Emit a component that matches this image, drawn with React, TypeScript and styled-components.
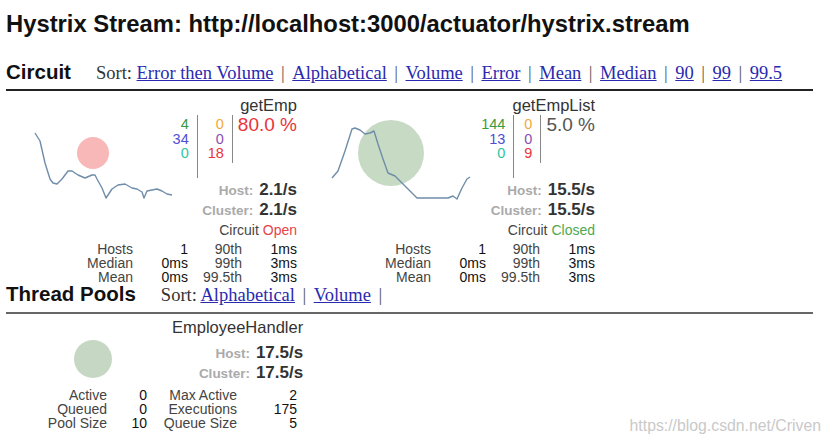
import React from "react";
import styled, { createGlobalStyle } from "styled-components";

const GlobalStyle = createGlobalStyle`
  body {
    margin: 0;
    background: #fff;
    font-family: "Liberation Sans", Arial, sans-serif;
    color: #333;
  }
`;

const Page = styled.div`
  position: relative;
  width: 830px;
  height: 443px;
  overflow: hidden;
  box-sizing: border-box;
  padding: 10px 17px 0 6px;
`;

const Title = styled.h1`
  margin: 0;
  font-size: 23.8px;
  line-height: 27px;
  font-weight: bold;
  color: #111;
`;

const SectionHeader = styled.div<{ $top: number; $pad: number; $line: string }>`
  display: flex;
  align-items: baseline;
  margin-top: ${(p) => p.$top}px;
  padding-bottom: ${(p) => p.$pad}px;
  border-bottom: 2px solid ${(p) => p.$line};
  line-height: 20px;
`;

const SectionTitle = styled.span`
  font-size: 20.5px;
  font-weight: bold;
  color: #111;
`;

const SortBar = styled.span`
  margin-left: 25px;
  font-family: "Liberation Serif", "Times New Roman", serif;
  font-size: 18.5px;
  color: #333;
  white-space: pre;

  a {
    color: #2a2ab0;
    text-decoration: underline;
  }
`;

const Sep = styled.span`
  margin: 0 7.5px;
  color: #555;
`;

const Monitors = styled.div`
  display: flex;
  gap: 7px;
`;

const Card = styled.div<{ $pt: number }>`
  width: 291px;
  padding-top: ${(p) => p.$pt}px;
`;

const Top = styled.div`
  display: flex;
`;

const ChartBox = styled.div`
  width: 166px;
  flex: none;
  svg {
    display: block;
    overflow: visible;
  }
`;

const Stats = styled.div`
  flex: 1;
  display: flex;
  flex-direction: column;
  align-items: flex-end;
  white-space: nowrap;
`;

const Name = styled.div`
  height: 16px;
  font-size: 16.5px;
  line-height: 16px;
  color: #333;
`;

const Counts = styled.div`
  display: flex;
  margin-top: 2px;
`;

const CountCol = styled.div<{ $h: number; $pl: number }>`
  box-sizing: border-box;
  height: ${(p) => p.$h}px;
  padding: 2px 8px 0 ${(p) => p.$pl}px;
  border-right: 1px solid #888;
  text-align: right;
  font-size: 14.5px;
  line-height: 14.5px;
`;

const Count = styled.div<{ $c: string }>`
  color: ${(p) => p.$c};
`;

const Pct = styled.div<{ $c: string }>`
  padding: 1px 0 0 5px;
  font-size: 19px;
  line-height: 18px;
  color: ${(p) => p.$c};
`;

const Rate = styled.div<{ $mt: number }>`
  display: flex;
  align-items: baseline;
  height: 20px;
  margin-top: ${(p) => p.$mt}px;
  font-size: 13.5px;
  line-height: 20px;
  font-weight: bold;
  color: #aaa;

  b {
    margin-left: 6px;
    font-size: 17px;
    line-height: 20px;
    color: #333;
  }
`;

const Status = styled.div`
  height: 20px;
  line-height: 20px;
  font-size: 14px;
  color: #444;
`;

const StatusWord = styled.span<{ $c: string }>`
  color: ${(p) => p.$c};
`;

const Table = styled.div<{ $cols: string; $mt: number }>`
  display: grid;
  grid-template-columns: ${(p) => p.$cols};
  margin-top: ${(p) => p.$mt}px;
  font-size: 14px;
  line-height: 14px;
  text-align: right;
  white-space: nowrap;
`;

const Cell = styled.span<{ $data?: boolean }>`
  color: ${(p) => (p.$data ? "#111" : "#444")};
`;

const Watermark = styled.div`
  position: absolute;
  right: 9px;
  top: 417px;
  font-size: 15.8px;
  line-height: 18px;
  color: #c9c9c9;
`;

const GREEN = "#3b9a3b";
const BLUE = "#4d4dd6";
const TEAL = "#2ec4a0";
const ORANGE = "#f2a93b";
const PURPLE = "#8b4fb0";
const RED = "#e8343a";

type Circuit = {
  name: string;
  counts: [number, number, number, number, number, number];
  pct: string;
  pctColor: string;
  host: string;
  cluster: string;
  open: boolean;
  line: string;
  r: number;
  fill: string;
};

const circuits: Circuit[] = [
  {
    name: "getEmp",
    counts: [4, 34, 0, 0, 0, 18],
    pct: "80.0 %",
    pctColor: RED,
    host: "2.1/s",
    cluster: "2.1/s",
    open: true,
    line:
      "29,36 34,44 39,66 44,82 47,86 51,87 56,82 62,74 66,74 72,78 79,81 86,78 89,78 91,82 96,91 100,101 106,92 112,88 119,87 126,91 131,92 136,95 138,101 141,94 146,93 151,92 156,94 161,97 166,98",
    r: 16,
    fill: "#f9b8b8",
  },
  {
    name: "getEmpList",
    counts: [144, 13, 0, 0, 0, 9],
    pct: "5.0 %",
    pctColor: "#555",
    host: "15.5/s",
    cluster: "15.5/s",
    open: false,
    line:
      "28,81 34,74 41,54 48,32 51,31 56,33 61,37 66,36 70,34 74,47 79,62 84,76 91,79 99,87 106,94 113,101 133,101 144,101 149,99 153,102 158,91 163,82 166,80",
    r: 33,
    fill: "#c7dbc4",
  },
];

const latency = [
  ["Hosts", "1", "90th", "1ms"],
  ["Median", "0ms", "99th", "3ms"],
  ["Mean", "0ms", "99.5th", "3ms"],
];

const poolRows = [
  ["Active", "0", "Max Active", "2"],
  ["Queued", "0", "Executions", "175"],
  ["Pool Size", "10", "Queue Size", "5"],
];

const circuitSorts = ["Error then Volume", "Alphabetical", "Volume", "Error", "Mean", "Median", "90", "99", "99.5"];
const poolSorts = ["Alphabetical", "Volume"];

const SortLinks = ({ items, trailing }: { items: string[]; trailing?: boolean }) => (
  <SortBar>
    Sort:{" "}
    {items.map((s, i) => (
      <React.Fragment key={s}>
        {i > 0 && <Sep>|</Sep>}
        <a href="#">{s}</a>
      </React.Fragment>
    ))}
    {trailing && <Sep>|</Sep>}
  </SortBar>
);

const CircuitCard = ({ c }: { c: Circuit }) => (
  <Card $pt={6}>
    <Top>
      <ChartBox>
        <svg width="166" height="142">
          <circle cx="87" cy="56" r={c.r} fill={c.fill} />
          <polyline
            points={c.line}
            fill="none"
            stroke="#6f8da8"
            strokeWidth="1.4"
            strokeLinejoin="round"
          />
        </svg>
      </ChartBox>
      <Stats>
        <Name>{c.name}</Name>
        <Counts>
          <CountCol $h={63} $pl={0}>
            <Count $c={GREEN}>{c.counts[0]}</Count>
            <Count $c={BLUE}>{c.counts[1]}</Count>
            <Count $c={TEAL}>{c.counts[2]}</Count>
          </CountCol>
          <CountCol $h={48} $pl={10}>
            <Count $c={ORANGE}>{c.counts[3]}</Count>
            <Count $c={PURPLE}>{c.counts[4]}</Count>
            <Count $c={RED}>{c.counts[5]}</Count>
          </CountCol>
          <Pct $c={c.pctColor}>{c.pct}</Pct>
        </Counts>
        <Rate $mt={2}>
          Host:<b>{c.host}</b>
        </Rate>
        <Rate $mt={0}>
          Cluster:<b>{c.cluster}</b>
        </Rate>
        <Status>
          Circuit{" "}
          <StatusWord $c={c.open ? "#e8434a" : "#4fa84f"}>
            {c.open ? "Open" : "Closed"}
          </StatusWord>
        </Status>
      </Stats>
    </Top>
    <Table $cols="1fr 55px 54px 55px" $mt={2}>
      {latency.map((row) =>
        row.map((v, i) => (
          <Cell key={row[0] + i} $data={i === 1 || i === 3}>
            {v}
          </Cell>
        ))
      )}
    </Table>
  </Card>
);

const PoolCard = () => (
  <Card $pt={5}>
    <Top>
      <ChartBox>
        <svg width="166" height="64">
          <circle cx="87" cy="40" r="19" fill="#c6d7c4" />
        </svg>
      </ChartBox>
      <Stats>
        <Name>EmployeeHandler</Name>
        <Rate $mt={8}>
          Host:<b>17.5/s</b>
        </Rate>
        <Rate $mt={0}>
          Cluster:<b>17.5/s</b>
        </Rate>
      </Stats>
    </Top>
    <Table $cols="1fr 40px 90px 60px" $mt={5}>
      {poolRows.map((row) =>
        row.map((v, i) => (
          <Cell key={row[0] + i} $data={i === 1 || i === 3}>
            {v}
          </Cell>
        ))
      )}
    </Table>
  </Card>
);

export default function App() {
  return (
    <>
      <GlobalStyle />
      <Page>
        <Title>Hystrix Stream: http://localhost:3000/actuator/hystrix.stream</Title>

        <SectionHeader $top={25} $pad={6} $line="#222">
          <SectionTitle>Circuit</SectionTitle>
          <SortLinks items={circuitSorts} />
        </SectionHeader>
        <Monitors>
          {circuits.map((c) => (
            <CircuitCard key={c.name} c={c} />
          ))}
        </Monitors>

        <SectionHeader $top={0} $pad={7} $line="#666">
          <SectionTitle>Thread Pools</SectionTitle>
          <SortLinks items={poolSorts} trailing />
        </SectionHeader>
        <Monitors>
          <PoolCard />
        </Monitors>

        <Watermark>https://blog.csdn.net/Criven</Watermark>
      </Page>
    </>
  );
}
